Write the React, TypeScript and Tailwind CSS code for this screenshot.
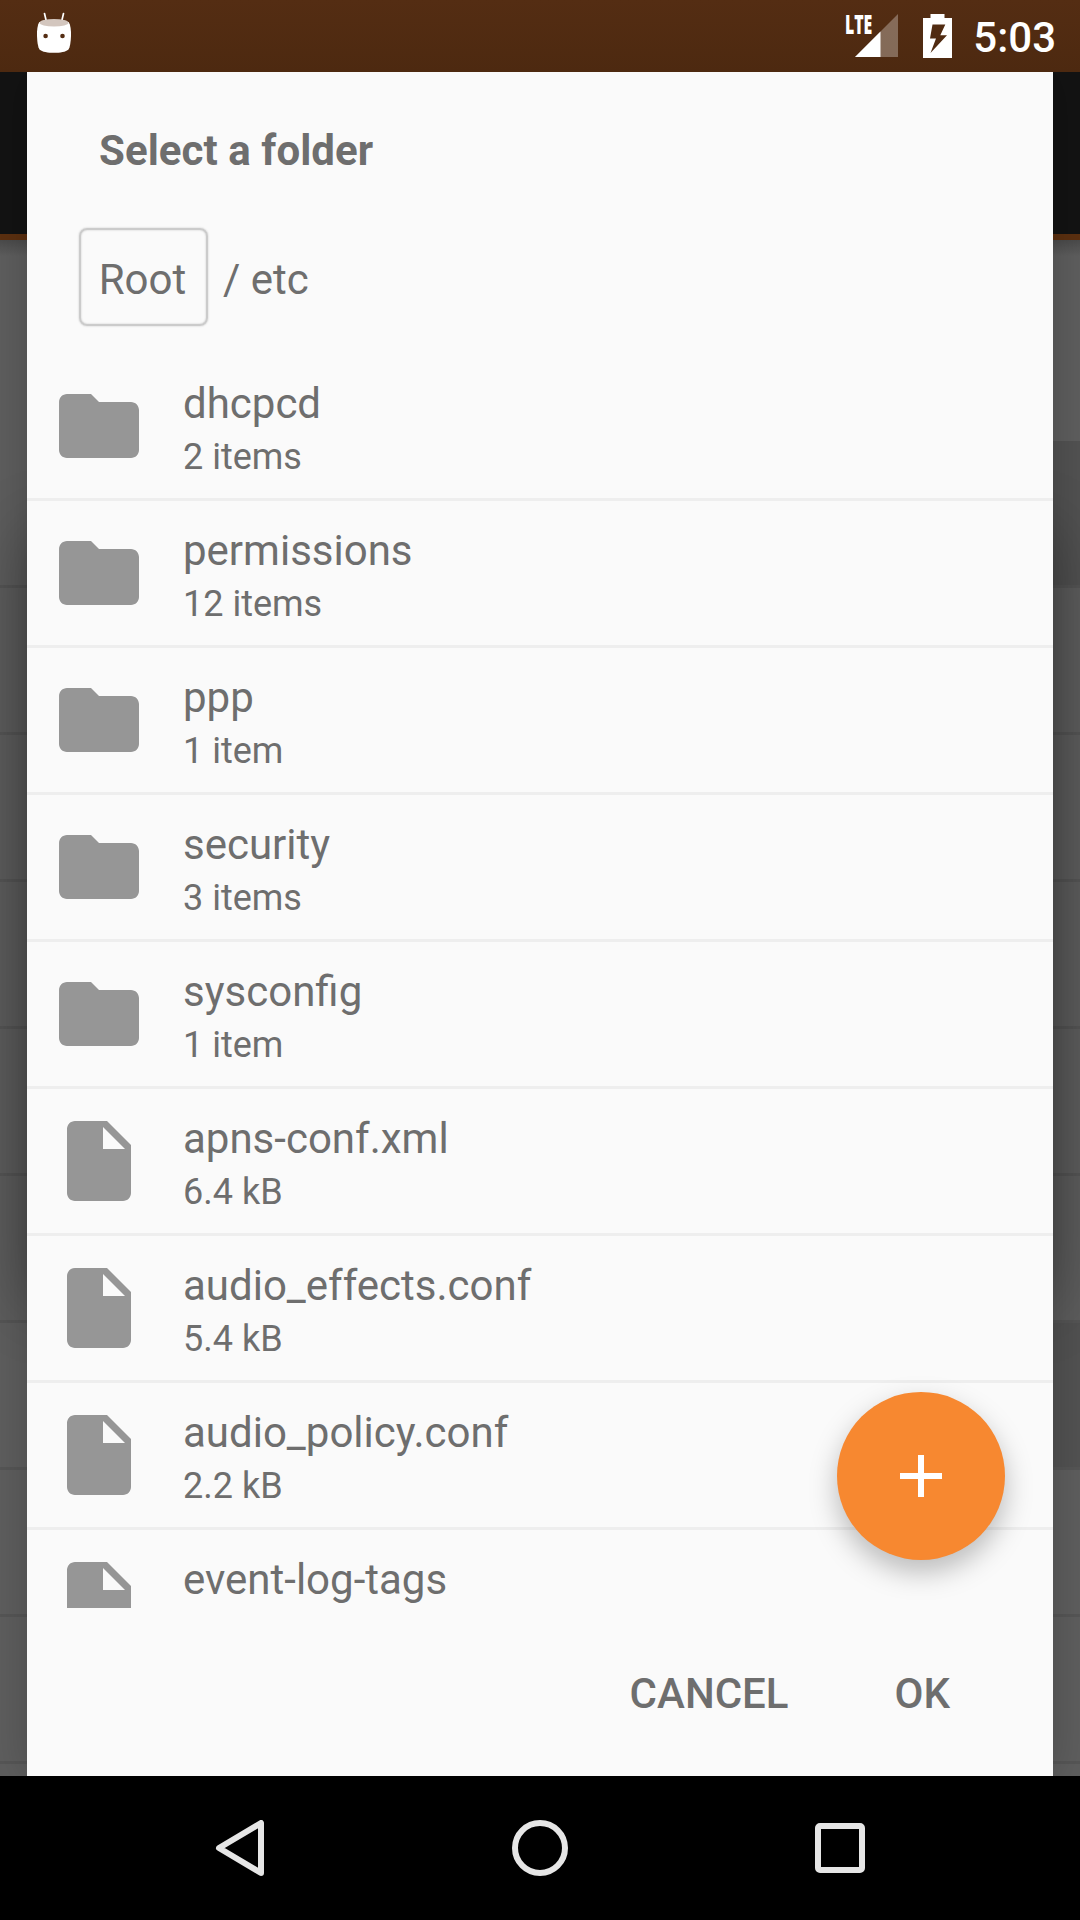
import React from "react";

type Entry = { name: string; detail?: string; kind: "folder" | "file" };

const entries: Entry[] = [
  { name: "dhcpcd", detail: "2 items", kind: "folder" },
  { name: "permissions", detail: "12 items", kind: "folder" },
  { name: "ppp", detail: "1 item", kind: "folder" },
  { name: "security", detail: "3 items", kind: "folder" },
  { name: "sysconfig", detail: "1 item", kind: "folder" },
  { name: "apns-conf.xml", detail: "6.4 kB", kind: "file" },
  { name: "audio_effects.conf", detail: "5.4 kB", kind: "file" },
  { name: "audio_policy.conf", detail: "2.2 kB", kind: "file" },
  { name: "event-log-tags", kind: "file" },
];

function EntryIcon({ kind }: { kind: Entry["kind"] }) {
  return (
    <svg className="mt-6 size-24 shrink-0 fill-[#969696]" viewBox="0 0 24 24">
      {kind === "folder" ? (
        <path d="M10 4H4c-1.1 0-1.99.9-1.99 2L2 18c0 1.1.9 2 2 2h16c1.1 0 2-.9 2-2V8c0-1.1-.9-2-2-2h-8l-2-2z" />
      ) : (
        <path
          fillRule="evenodd"
          d="M6 2c-1.1 0-2 .9-2 2v16c0 1.1.9 2 2 2h12c1.1 0 2-.9 2-2V8l-6-6H6zm7 7V3.500L18.500 9H13z"
        />
      )}
    </svg>
  );
}

function StatusBar() {
  return (
    <header className="flex h-[72px] shrink-0 items-start justify-between bg-linear-to-b from-[#542d13] to-[#4d2910]">
      <svg className="ml-9 mt-3 h-[42px] w-9" viewBox="0 0 36 42">
        <path d="M8.500 1.500 10.500 10M27.500 1.500 25.500 10" stroke="#fff" strokeWidth="1.700" strokeLinecap="round" />
        <path d="M3.300 10C1.500 13 .8 18 1 24c.2 6 .9 11 2.500 13.500C6 40 12 40.800 18 40.800s12-.8 14.500-3.300C34.100 35 34.800 30 35 24c.2-6-.5-11-2.300-14z" fill="#fff" />
        <ellipse cx="18" cy="10.700" rx="14.500" ry="3.800" fill="#d3c6be" />
        <circle cx="9.600" cy="24" r="2.300" fill="#542d13" />
        <circle cx="26.500" cy="24" r="2.300" fill="#542d13" />
      </svg>
      <div className="flex h-[72px] items-start text-white">
        <span className="mt-[14px] block h-5 w-[28px] origin-left scale-x-[0.61] whitespace-nowrap font-['Open_Sans',sans-serif] text-[26px] font-extrabold leading-5">
          LTE
        </span>
        <svg className="-ml-[18px] mt-[14px] h-[43px] w-[43px]" viewBox="0 0 43 43">
          <path d="M0 43 43 0V43z" fill="#fff" opacity=".3" />
          <path d="M0 43 25.500 17.500V43z" fill="#fff" />
        </svg>
        <svg className="ml-[25px] mt-[14px] h-11 w-[29px]" viewBox="0 0 29 44">
          <path fill="#fff" fillRule="evenodd" d="M7.500 0h14v4H29v40H0V4h7.500zM9.500 10.500 7 24.500h6L7.500 39 24 21.300h-6.700l5-10.800z" />
        </svg>
        <span className="ml-[21px] mr-[24px] mt-[14px] text-[42px] font-medium leading-[48px]">5:03</span>
      </div>
    </header>
  );
}

function BackdropRow({ selected = false }: { selected?: boolean }) {
  return (
    <div className="flex h-[147px] shrink-0 flex-col">
      <div className="flex flex-1">
        <div className="flex-1" />
        <div className={selected ? "flex-1 bg-[#525252]" : "flex-1"} />
      </div>
      <div className="h-[3px] bg-[#565656]" />
    </div>
  );
}

function Backdrop() {
  return (
    <div className="absolute inset-0 flex flex-col bg-[#5e5e5e]">
      <div className="h-[162px] shrink-0 bg-[#131313]" />
      <div className="h-1.5 shrink-0 bg-[#5c3010]" />
      <div className="h-[201px] shrink-0 bg-linear-to-b from-[#4b4b4b] via-[#5e5e5e] via-8% to-[#5e5e5e]" />
      <BackdropRow selected />
      <BackdropRow />
      <BackdropRow />
      <BackdropRow />
      <BackdropRow />
      <BackdropRow />
      <BackdropRow selected />
      <BackdropRow />
      <BackdropRow />
    </div>
  );
}

export default function App() {
  return (
    <div className="flex h-[1920px] w-[1080px] flex-col overflow-hidden bg-black font-['Roboto',sans-serif] text-[#6e6e6e]">
      <StatusBar />
      <main className="relative flex h-[1704px] shrink-0 justify-center overflow-hidden">
        <Backdrop />
        <div className="absolute left-[27px] top-[460px] h-[770px] w-[1026px] shadow-[0_0_60px_rgba(0,0,0,0.3)]" />
        <section className="relative flex w-[1026px] flex-col bg-[#fafafa] shadow-[0_0_40px_rgba(0,0,0,0.22)]">
          <h1 className="ml-[72px] mt-[54px] text-[42px] font-bold leading-[50px] tracking-[0.06px]">Select a folder</h1>
          <nav className="ml-[52px] mt-[52px] flex h-[98px] items-center text-[42px]">
            <button className="h-[98px] w-[129px] rounded-[8px] border-2 border-[#cbcbcb] pr-0.5 pt-1 shadow-[0_0_2px_#c4c4c4,inset_0_0_2px_#c4c4c4]">
              Root
            </button>
            <span className="ml-[15px] pt-1">/ etc</span>
          </nav>
          <ul className="mt-[28px] h-[1254px] shrink-0 overflow-hidden">
            {entries.map((e) => (
              <li key={e.name} className="flex h-[147px] items-start border-b-[3px] border-[#eeeeee] pl-6">
                <EntryIcon kind={e.kind} />
                <div className="ml-9 mt-[25px] flex flex-col">
                  <span className="text-[42px] leading-[50px]">{e.name}</span>
                  {e.detail && <span className="mt-1 text-[36px] leading-[48px]">{e.detail}</span>}
                </div>
              </li>
            ))}
          </ul>
          <footer className="mr-[103px] mt-[61px] flex justify-end gap-[106px] text-[42px] font-medium leading-[50px]">
            <button>CANCEL</button>
            <button>OK</button>
          </footer>
          <button
            aria-label="New folder"
            className="absolute left-[810px] top-[1320px] flex size-[168px] items-center justify-center rounded-full bg-[#f78830] shadow-[0_12px_28px_rgba(0,0,0,0.26)]"
          >
            <svg className="size-[42px]" viewBox="0 0 42 42">
              <path d="M21 0v42M0 21h42" stroke="#fff" strokeWidth="6" />
            </svg>
          </button>
        </section>
      </main>
      <nav className="flex h-36 items-center justify-center gap-[244px]">
        <svg className="size-14" viewBox="0 0 56 56" fill="none" stroke="#e6e6e6" strokeWidth="6" strokeLinejoin="round">
          <path d="M49 3v50L7 28z" />
        </svg>
        <svg className="size-14" viewBox="0 0 56 56" fill="none" stroke="#e6e6e6" strokeWidth="6">
          <circle cx="28" cy="28" r="25" />
        </svg>
        <svg className="size-14" viewBox="0 0 56 56" fill="none" stroke="#e6e6e6" strokeWidth="6">
          <rect x="6" y="6" width="44" height="44" rx="2" />
        </svg>
      </nav>
    </div>
  );
}
